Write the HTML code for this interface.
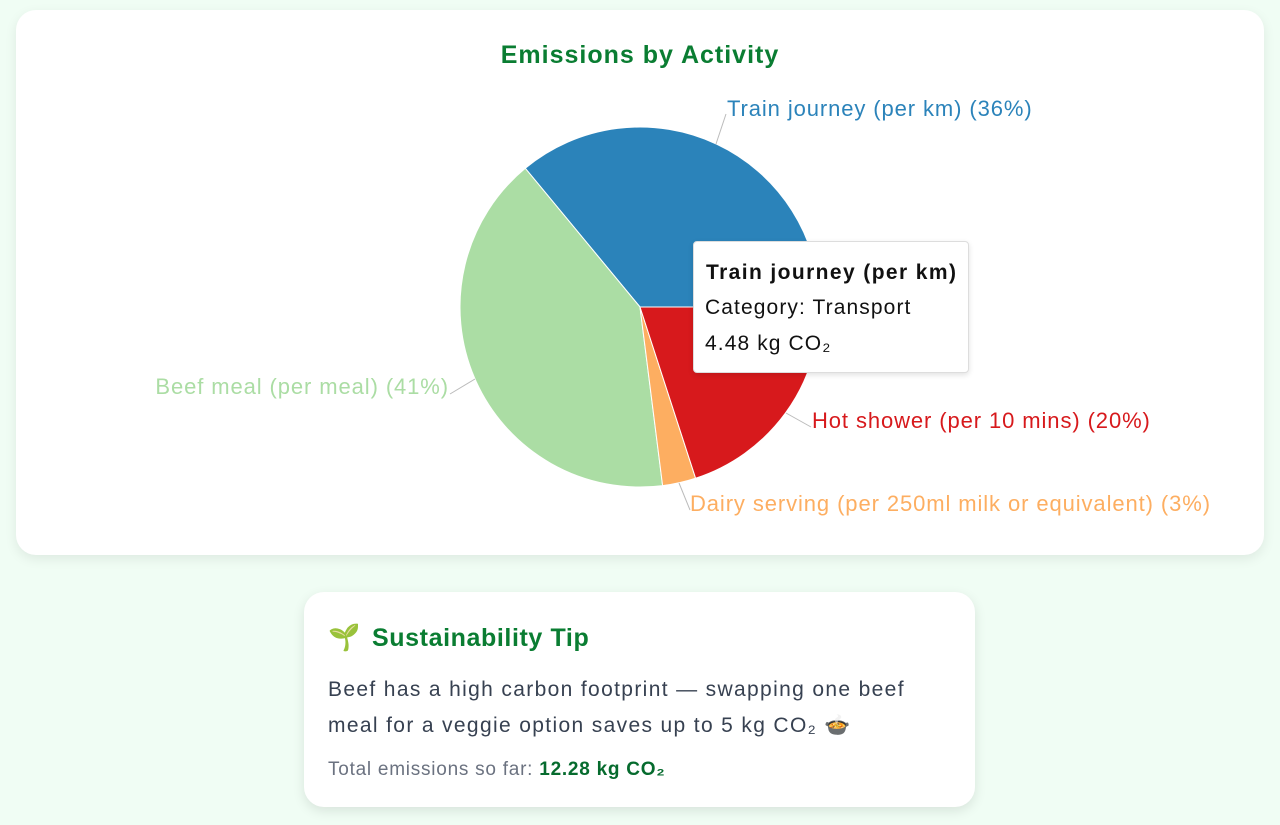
<!DOCTYPE html>
<html><head><meta charset="utf-8"><style>
body{margin:0;background:#f0fdf4;font-family:"Liberation Sans",sans-serif;width:1280px;height:825px;overflow:hidden;position:relative}
.card{position:absolute;left:16px;top:10px;width:1248px;height:545px;background:#fff;border-radius:20px;box-shadow:0 4px 12px rgba(0,0,0,0.08)}
.tip{position:absolute;left:304px;top:592px;width:671px;height:215px;background:#fff;border-radius:20px;box-shadow:0 4px 12px rgba(0,0,0,0.1)}
.tt{position:absolute;left:693px;top:241px;width:276px;height:132px;background:#fff;border:1px solid #ddd;border-radius:4px;box-shadow:0 2px 6px rgba(0,0,0,0.12);box-sizing:border-box;color:#111;font-size:21px;letter-spacing:1.1px;white-space:nowrap}
</style></head><body>
<div class="card"></div>
<svg width="1280" height="560" style="position:absolute;left:0;top:0">
<text x="640" y="63" text-anchor="middle" font-size="25" font-weight="bold" fill="#0a7d32" font-family="Liberation Sans" letter-spacing="1">Emissions by Activity</text>
<g stroke="#fff" stroke-width="1">
<path d="M640 307 L820 307 A180 180 0 0 0 525.3 168.3 Z" fill="#2b83ba"/>
<path d="M640 307 L525.3 168.3 A180 180 0 0 0 662.6 485.6 Z" fill="#abdda4"/>
<path d="M640 307 L662.6 485.6 A180 180 0 0 0 695.6 478.2 Z" fill="#fdae61"/>
<path d="M640 307 L695.6 478.2 A180 180 0 0 0 820 307 Z" fill="#d7191c"/>
</g>
<g stroke="#bbb" stroke-width="1" fill="none">
<path d="M716 144 L726 114"/><path d="M475 379 L450 394"/><path d="M786 413 L811 427"/><path d="M679 483 L690 510"/>
</g>
<g font-size="22" font-family="Liberation Sans" letter-spacing="0.9">
<text x="727" y="116" fill="#2b83ba">Train journey (per km) (36%)</text>
<text x="449" y="394" fill="#abdda4" text-anchor="end">Beef meal (per meal) (41%)</text>
<text x="812" y="428" fill="#d7191c">Hot shower (per 10 mins) (20%)</text>
<text x="690" y="511" fill="#fdae61">Dairy serving (per 250ml milk or equivalent) (3%)</text>
</g>
</svg>
<div class="tt">
<div style="position:absolute;left:12px;top:19px;font-weight:bold;letter-spacing:1.4px">Train journey (per km)</div>
<div style="position:absolute;left:11px;top:54px">Category: Transport</div>
<div style="position:absolute;left:11px;top:90px">4.48 kg CO₂</div>
</div>
<div class="tip">
<div style="position:absolute;left:24px;top:30px;font-size:25px;font-weight:bold;color:#0a7d32;letter-spacing:0.6px"><span style="font-size:26px;display:inline-block;width:44px">🌱</span>Sustainability Tip</div>
<div style="position:absolute;left:24px;top:80px;width:600px;font-size:21px;line-height:36px;color:#374151;letter-spacing:1.35px">Beef has a high carbon footprint — swapping one beef meal for a veggie option saves up to 5 kg CO₂ 🍲</div>
<div style="position:absolute;left:24px;top:167px;font-size:19px;color:#6b7280;letter-spacing:0.75px;white-space:nowrap">Total emissions so far: <b style="color:#066b2e">12.28 kg CO₂</b></div>
</div>
</body></html>
